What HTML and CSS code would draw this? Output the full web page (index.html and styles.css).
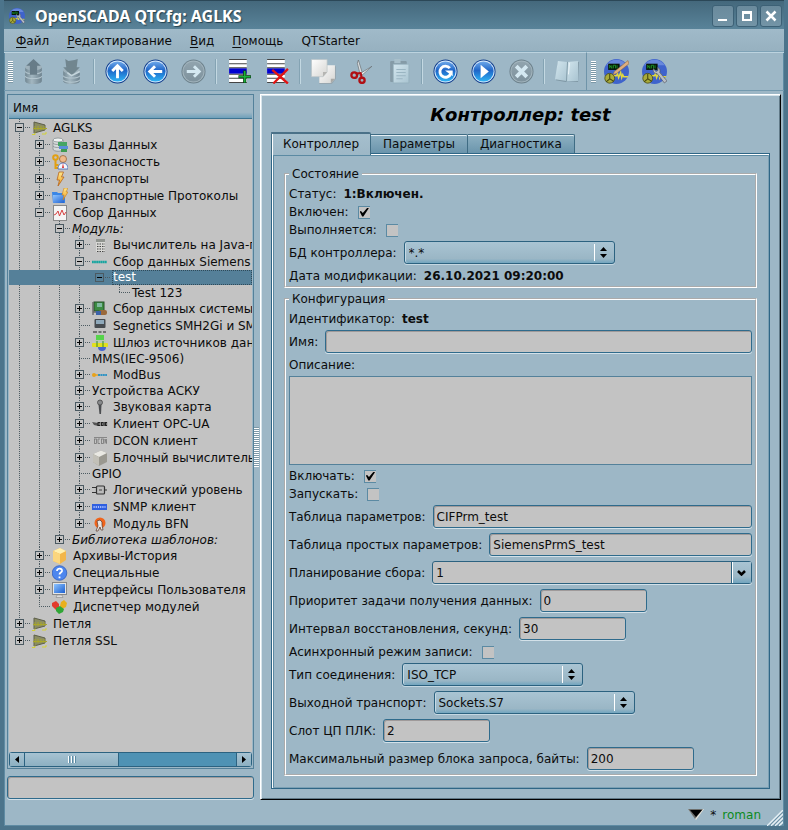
FILE: index.html
```html
<!DOCTYPE html>
<html lang="ru">
<head>
  <meta charset="UTF-8">
  <title>OpenSCADA QTCfg: AGLKS</title>
  <meta name="viewport" content="width=device-width, initial-scale=1.0">
  <link rel="stylesheet" href="styles.css">
</head>
<body>
<svg class="sprite" aria-hidden="true">
  <defs>
    <linearGradient id="gBlue" x1="0" y1="0" x2="0" y2="1">
      <stop offset="0" stop-color="#6fa8ea"/><stop offset=".45" stop-color="#1f66c8"/><stop offset="1" stop-color="#2fb4f4"/>
    </linearGradient>
    <linearGradient id="gGray" x1="0" y1="0" x2="0" y2="1">
      <stop offset="0" stop-color="#91a4ae"/><stop offset="1" stop-color="#7e929d"/>
    </linearGradient>
    <linearGradient id="gDb" x1="0" y1="0" x2="1" y2="0">
      <stop offset="0" stop-color="#728792"/><stop offset=".4" stop-color="#a3b7c1"/><stop offset="1" stop-color="#6d828e"/>
    </linearGradient>
    <linearGradient id="gPage" x1="0" y1="0" x2="1" y2="1">
      <stop offset="0" stop-color="#ffffff"/><stop offset="1" stop-color="#d5d5d2"/>
    </linearGradient>
    <linearGradient id="gPale" x1="0" y1="0" x2="1" y2="1">
      <stop offset="0" stop-color="#d3e6ee"/><stop offset="1" stop-color="#a9c4d1"/>
    </linearGradient>
    <linearGradient id="gGold" x1="0" y1="0" x2="0" y2="1">
      <stop offset="0" stop-color="#ffe98c"/><stop offset="1" stop-color="#f09a1c"/>
    </linearGradient>
    <linearGradient id="gSky" x1="0" y1="0" x2="1" y2="1">
      <stop offset="0" stop-color="#8ec4ff"/><stop offset="1" stop-color="#1c5fd0"/>
    </linearGradient>
  </defs>
  <symbol id="dbup" viewBox="0 0 24 24">
    <path d="M4 8v13c0 4 16 4 16 0V8z" fill="url(#gDb)"/>
    <path d="M4 12c2 3 14 3 16 0M4 16.500c2 3 14 3 16 0" fill="none" stroke="#b4c6cf" stroke-width="1"/>
    <ellipse cx="12" cy="8" rx="8" ry="3" fill="#9fb2bc"/>
    <path d="M12 0L5 6.500h3.500V15h7V6.500H19z" fill="#677c88"/>
  </symbol>
  <symbol id="dbdown" viewBox="0 0 24 24">
    <path d="M4 11v10c0 4 16 4 16 0V11z" fill="url(#gDb)"/>
    <path d="M4 16c2 3 14 3 16 0M4 20c2 3 14 3 16 0" fill="none" stroke="#b4c6cf" stroke-width="1"/>
    <ellipse cx="12" cy="11" rx="8" ry="3" fill="#9fb2bc"/>
    <path d="M6 0l3 2 6-1 3-1-1 8h3l-8 8-8-8h3z" fill="#71868f"/>
    <path d="M8 13l4 3 8-4" fill="none" stroke="#c5d5dc" stroke-width="1.500"/>
  </symbol>
  <symbol id="disc" viewBox="0 0 26 26">
    <circle cx="13" cy="13" r="12.500" fill="#0f3c8c"/>
    <circle cx="13" cy="13" r="11.500" fill="#d6e9fb"/>
    <circle cx="13" cy="13" r="10.500" fill="url(#gBlue)"/>
  </symbol>
  <symbol id="discgray" viewBox="0 0 26 26">
    <circle cx="13" cy="13" r="12.500" fill="#6c808b"/>
    <circle cx="13" cy="13" r="11.500" fill="#a3b5be"/>
    <circle cx="13" cy="13" r="10.500" fill="url(#gGray)"/>
  </symbol>
  <symbol id="up" viewBox="0 0 26 26">
    <use href="#disc"/><path d="M13 20V8M7.500 12.500L13 7l5.500 5.500" fill="none" stroke="#fff" stroke-width="3"/>
  </symbol>
  <symbol id="back" viewBox="0 0 26 26">
    <use href="#disc"/><path d="M20 13H8M12.500 7.500L7 13l5.500 5.500" fill="none" stroke="#fff" stroke-width="3"/>
  </symbol>
  <symbol id="forward" viewBox="0 0 26 26">
    <use href="#discgray"/><path d="M6 13h12M13.500 7.500L19 13l-5.500 5.500" fill="none" stroke="#d4e8f1" stroke-width="3"/>
  </symbol>
  <symbol id="rowadd" viewBox="0 0 24 24">
    <path d="M2 0h17v23H2z" fill="#fff"/><path d="M2 .5h17M2 4.500h17M2 8.500h17M2 14.500h17M2 18.500h17M2 22.500h17" stroke="#444" stroke-width="1"/>
    <path d="M2 9h17v5H2z" fill="#0202d0"/>
    <path d="M17 11v12M11 17h12" stroke="#0b3b12" stroke-width="3"/><path d="M17 11.500v11M11.500 17h11" stroke="#19b23a" stroke-width="1.600"/>
  </symbol>
  <symbol id="rowdel" viewBox="0 0 24 24">
    <path d="M2 0h17v23H2z" fill="#fff"/><path d="M2 .5h17M2 4.500h17M2 8.500h17M2 14.500h17M2 18.500h17M2 22.500h17" stroke="#444" stroke-width="1"/>
    <path d="M2 9h17v5H2z" fill="#0202d0"/>
    <path d="M7 10.500l15 13M22 9.500L8 23.500" stroke="#e31313" stroke-width="2.200"/>
  </symbol>
  <symbol id="copy" viewBox="0 0 24 24">
    <path d="M8 7h16v12l-4 5H8z" fill="#97a7b0"/><path d="M8 6h15v13l-4 4H8z" fill="url(#gPage)"/><path d="M23 19h-4v4z" fill="#a9a9a6"/>
    <path d="M.5.5h15v12l-4 4.500H.5z" fill="url(#gPage)" stroke="#b7c0c4" stroke-width=".6"/><path d="M15.500 12.500h-4V17z" fill="#b5b5b2"/>
  </symbol>
  <symbol id="cut" viewBox="0 0 24 24">
    <path d="M9 1l4 13-2 2L8 4z" fill="#dde1e3" stroke="#6b7377" stroke-width=".7"/>
    <path d="M22 7L12 16l-3-1z" fill="#eef0f1" stroke="#6b7377" stroke-width=".7"/>
    <circle cx="5" cy="15.500" r="2.700" fill="none" stroke="#b00f14" stroke-width="2.200"/>
    <circle cx="12.500" cy="20.500" r="2.500" fill="none" stroke="#b00f14" stroke-width="2.200"/>
    <path d="M7 14l5-.5M12 18l-.5-4" stroke="#b00f14" stroke-width="2"/>
  </symbol>
  <symbol id="paste" viewBox="0 0 24 24">
    <rect x="3" y="2" width="16" height="20" rx="1" fill="#859ba7"/><path d="M7 0h6v4H7z" fill="#a9c0cb"/>
    <path d="M6 5h15v18H6z" fill="url(#gPale)" stroke="#94afbc" stroke-width=".7"/><path d="M9 10h9M9 13h9M9 16h9M9 19h6" stroke="#9ab5c2" stroke-width="1"/>
  </symbol>
  <symbol id="refresh" viewBox="0 0 26 26">
    <use href="#disc"/><path d="M17.500 9.500A5.800 5.800 0 1 0 18.500 15" fill="none" stroke="#fff" stroke-width="3"/><path d="M12.500 12h8v6z" fill="#fff"/>
  </symbol>
  <symbol id="play" viewBox="0 0 26 26"><use href="#disc"/><path d="M10 6l8.500 7-8.500 7z" fill="#fff"/></symbol>
  <symbol id="stop" viewBox="0 0 26 26"><use href="#discgray"/><path d="M7.500 7.500l11 11M18.500 7.500l-11 11" stroke="#d4e8f1" stroke-width="4"/></symbol>
  <symbol id="book" viewBox="0 0 26 24">
    <path d="M3 3l9-1 2 1 11-1-1 21-11-1-2 1-10-2z" fill="#7f97a4"/>
    <path d="M3 1l10 1-1 20L0 20z" fill="url(#gPale)"/><path d="M13 2l11-1v21l-12 0z" fill="url(#gPale)"/>
    <path d="M13 2l-1 20" stroke="#7f9aa8" stroke-width="1"/><path d="M15 3l-1 12" stroke="#eef7fb" stroke-width="1"/>
  </symbol>
  <symbol id="scada" viewBox="0 0 24 24">
    <circle cx="12" cy="12" r="12" fill="#3f63cc"/><path d="M2 6a12 12 0 0 1 20 0z" fill="#6888dc"/>
    <path d="M4 4.500h11v6H4z" fill="#07150a"/><path d="M5.500 9V6l2 3V6M9 9V6h2v3M12.500 6v3" fill="none" stroke="#1fa02b" stroke-width=".8"/>
    <path d="M9 16h3l1-2 1 4 2-5 1 5 1-3 1 2h4" fill="none" stroke="#e2d940" stroke-width="1.400"/>
    <circle cx="5.500" cy="18.500" r="4.700" fill="#a9ab3a" stroke="#4c4d16" stroke-width=".8"/><path d="M5.500 19V14.500M5.500 19l-3.500 3M5.500 19l4 2.500" stroke="#45460f" stroke-width="1"/>
  </symbol>
  <symbol id="scadapen" viewBox="0 0 24 24">
    <use href="#scada"/><path d="M23 1.500l1 3L12 14l-3.500 1L10 12z" fill="#ddae80" stroke="#8a6238" stroke-width=".5"/>
  </symbol>
  <symbol id="scadakey" viewBox="0 0 24 24">
    <use href="#scada"/><path d="M11 9c-1 3 1 5 3.500 5l7 9 2.500-2-7-8c1-2 0-4-2-5l.3 3-2 1z" fill="#b9bec6" stroke="#4d525c" stroke-width=".6"/>
  </symbol>

  <symbol id="station" viewBox="0 0 16 16">
    <path d="M2 2l11 3v5L2 13z" fill="#8b8d63" stroke="#5d5f4a" stroke-width="1"/>
    <path d="M1 8.500h14M3 6v4M6 6v4M9 6v4M12 6v4" stroke="#a9a72a" stroke-width="1"/><path d="M0 14.500h3v-2M10 14h4v-2" fill="none" stroke="#d3d135" stroke-width="1"/>
  </symbol>
  <symbol id="db" viewBox="0 0 16 16">
    <path d="M1 3v9c0 3 10 3 10 0V3z" fill="#d6dadb" stroke="#7b8487" stroke-width=".7"/><ellipse cx="6" cy="3" rx="5" ry="2" fill="#f0f3f3" stroke="#7b8487" stroke-width=".7"/>
    <path d="M1 6c1 2 8 2 10 0M1 9c1 2 8 2 10 0" fill="none" stroke="#7b8487" stroke-width=".7"/>
    <rect x="6" y="5" width="9" height="4" fill="#45a564"/><rect x="7" y="9" width="9" height="3" fill="#5b8fd8"/><rect x="9" y="12" width="6" height="3" fill="#3d9b50"/>
  </symbol>
  <symbol id="users" viewBox="0 0 16 16">
    <circle cx="3.500" cy="3.500" r="2.300" fill="none" stroke="#e2a013" stroke-width="2"/><path d="M3.500 6v9M3.500 11h3M3.500 14h3" stroke="#e2a013" stroke-width="2"/>
    <circle cx="11" cy="5" r="3.500" fill="#efb98a" stroke="#915a2b" stroke-width=".7"/><path d="M6 15c0-8 10-8 10 0z" fill="#f4f7fc" stroke="#3e62b4" stroke-width=".8"/><path d="M11 9l-1 5h2z" fill="#d33"/>
  </symbol>
  <symbol id="bolt" viewBox="0 0 16 16"><path d="M7 1h4.500L9.500 6H12L6 15l1.500-6H5z" fill="url(#gGold)" stroke="#b8641b" stroke-width=".8"/></symbol>
  <symbol id="folder" viewBox="0 0 16 16">
    <path d="M0 4h5l1 1h7v10H1z" fill="#3a86e6"/><path d="M1 7h12l-1 8H1z" fill="url(#gSky)"/><path d="M12 0h4l-2 4h2l-5 8 1-5h-2z" fill="url(#gGold)" stroke="#c9801b" stroke-width=".6"/>
  </symbol>
  <symbol id="chart" viewBox="0 0 16 16">
    <rect x="1.500" y=".5" width="13" height="15" fill="#f4f4f4" stroke="#888"/><path d="M2 10l2-1 2-3 1.500 5L10 5l2 5 2-3" fill="none" stroke="#d84242" stroke-width="1"/>
  </symbol>
  <symbol id="calc" viewBox="0 0 16 16">
    <rect x="4" y="2" width="9" height="13" fill="#d9d9d6"/><rect x="4" y="2" width="9" height="3" fill="#90948f"/><path d="M5 7h8M5 9.500h8M5 12h8M5 14.500h8" stroke="#444" stroke-width="1.200" stroke-dasharray="1.500 1"/>
  </symbol>
  <symbol id="siemens" viewBox="0 0 16 16"><path d="M0 8h15" stroke="#16a5a0" stroke-width="2.400" stroke-dasharray="1.800 .3"/></symbol>
  <symbol id="board" viewBox="0 0 16 16">
    <rect x="2" y="1" width="10" height="9" fill="#3d8c42" stroke="#245028"/><rect x="5" y="2" width="5" height="4" fill="#7fb9a0"/><path d="M1 1v13M1 11h8" stroke="#666" stroke-width="1.400"/>
    <rect x="7" y="9" width="8" height="5" rx="2" fill="#9a6a3c"/><rect x="4" y="10" width="5" height="4" fill="#3b62a8"/>
  </symbol>
  <symbol id="smh" viewBox="0 0 16 16">
    <rect x="2.500" y="1" width="11" height="9" rx="1" fill="#464b50"/><rect x="4" y="2" width="8" height="4" fill="#8fa9bb"/><path d="M1 14h4M6.500 14h3M11 14h3" stroke="#555" stroke-width="1.400"/>
  </symbol>
  <symbol id="gate" viewBox="0 0 16 16">
    <rect x="4" y="0" width="8" height="5" fill="#56d34b"/><path d="M3 5h11v3H3z" fill="#b9c8b6"/><rect x="0" y="8" width="16" height="4" rx="1" fill="#e2df20"/><path d="M5 6v6M11 6v6" stroke="#2f8f2a"/><path d="M6 12h8a4 4 0 0 1-8 0z" fill="#4565cf"/>
  </symbol>
  <symbol id="modbus" viewBox="0 0 16 16"><circle cx="2" cy="8" r="2" fill="#e8a21b"/><path d="M2 8h4" stroke="#e8a21b" stroke-width="1.400"/><path d="M6 8h9" stroke="#2f93c4" stroke-width="2.200" stroke-dasharray="2 .4"/></symbol>
  <symbol id="mic" viewBox="0 0 16 16"><circle cx="8" cy="3.500" r="2.500" fill="#87898b" stroke="#444" stroke-width=".8"/><path d="M6.500 6h3L9 15H7.500z" fill="#4b4d50"/></symbol>
  <symbol id="opc" viewBox="0 0 16 16"><path d="M0 6l6 1v3L2 9z" fill="#555"/><path d="M5.500 8h10" stroke="#222" stroke-width="4" stroke-dasharray="2.800 .6"/><path d="M6.500 8h2M10 8h1M14 8h1" stroke="#bbb" stroke-width="1"/></symbol>
  <symbol id="dcon" viewBox="0 0 16 16"><rect x="2.500" y="6" width="2" height="4.500" fill="none" stroke="#777" stroke-width=".8"/><path d="M8 6H6v4.500h2M13 10.500V6l1.500 4.500V6M2 4.500h13" fill="none" stroke="#777" stroke-width=".8"/><rect x="9.500" y="6" width="2" height="4.500" fill="none" stroke="#777" stroke-width=".8"/></symbol>
  <symbol id="block" viewBox="0 0 16 16"><path d="M1 4l8-3.500L15 3v9l-8 4-6-4z" fill="#9a9890"/><path d="M1 4l8-3.500L15 3 7 7z" fill="#e9e8e3"/><path d="M1 4l6 3v9l-6-4z" fill="#c2c0b8"/></symbol>
  <symbol id="logic" viewBox="0 0 16 16"><path d="M0 5.500h5M0 10.500h5M11 8h4" stroke="#333" stroke-width="1.200"/><rect x="4.500" y="4" width="8" height="8" rx="1" fill="#bbb" stroke="#333" stroke-width="1.200"/><path d="M7 8h3" stroke="#444"/></symbol>
  <symbol id="snmp" viewBox="0 0 16 16"><rect x="0" y="5" width="15" height="6" fill="#2f5fe0"/><path d="M1.500 8h12" stroke="#a9c0ff" stroke-width="2" stroke-dasharray="1.200 1"/></symbol>
  <symbol id="bfn" viewBox="0 0 16 16"><circle cx="8" cy="7" r="5.500" fill="#f0641c"/><path d="M5 5l3-1 2 2v3l1 5H9l-1-3-2 4H4l2-5z" fill="#e9e4e0" stroke="#5a3a2c" stroke-width=".7"/></symbol>
  <symbol id="archive" viewBox="0 0 16 16"><path d="M1 3l7-3 6 3v9l-6 4-7-3z" fill="#f2b64a"/><path d="M1 3l7-3 6 3-6 3z" fill="#fff0b0"/><path d="M1 3l7 3v10l-7-3z" fill="#fbd67e"/></symbol>
  <symbol id="help" viewBox="0 0 16 16"><circle cx="7.500" cy="8" r="7.300" fill="#4d86ee" stroke="#3260bd" stroke-width=".8"/><path d="M5 6c0-3.500 5.500-3 5 0-.3 1.500-2.500 1.500-2.500 3.500M7.500 11.500v1.800" fill="none" stroke="#fff" stroke-width="1.800"/></symbol>
  <symbol id="monitor" viewBox="0 0 16 16"><rect x=".5" y=".5" width="14" height="12" fill="#e4e6e8" stroke="#888"/><rect x="2" y="2" width="11" height="9" fill="url(#gSky)"/><path d="M5 13h5l1 2.500H4z" fill="#ddd" stroke="#888" stroke-width=".6"/></symbol>
  <symbol id="modules" viewBox="0 0 16 16"><path d="M0 4l4-2 3 3v4l-3 2-4-4z" fill="#e23b2b"/><path d="M9 3l3-2 3 3-1 4-4 2-2-3z" fill="#e8b01e"/><path d="M4 9l4-2 4 3-1 3-4 2-3-3z" fill="#31a636"/></symbol>
  <symbol id="updown" viewBox="0 0 7 11"><path d="M3.500 0L7 4H0zM3.500 11L0 7h7z"/></symbol>
</svg>

<div class="window">
  <header class="titlebar">
    <svg class="ico16"><use href="#scadakey"/></svg>
    <h1>OpenSCADA QTCfg: AGLKS</h1>
    <button class="winbtn" aria-label="Свернуть"><svg viewBox="0 0 12 12"><path d="M1 10h9" stroke="#fff" stroke-width="2"/></svg></button>
    <button class="winbtn" aria-label="Развернуть"><svg viewBox="0 0 12 12"><path d="M1 1h10v10H1zM3 4v5h6V4z" fill="#fff" fill-rule="evenodd"/></svg></button>
    <button class="winbtn" aria-label="Закрыть"><svg viewBox="0 0 12 12"><path d="M1.500 1.500l9 9M10.500 1.500l-9 9" stroke="#fff" stroke-width="2.500"/></svg></button>
  </header>

  <nav class="menubar">
    <a href="#"><u>Ф</u>айл</a>
    <a href="#"><u>Р</u>едактирование</a>
    <a href="#"><u>В</u>ид</a>
    <a href="#"><u>П</u>омощь</a>
    <a href="#">QTStarter</a>
  </nav>

  <div class="toolbars">
    <div class="toolbar">
      <span class="grip"></span>
      <button class="tool" aria-label="Загрузить"><svg><use href="#dbup"/></svg></button>
      <button class="tool" aria-label="Сохранить"><svg><use href="#dbdown"/></svg></button>
      <span class="sep"></span>
      <button class="tool" aria-label="Вверх"><svg><use href="#up"/></svg></button>
      <button class="tool" aria-label="Назад"><svg><use href="#back"/></svg></button>
      <button class="tool" aria-label="Вперёд"><svg><use href="#forward"/></svg></button>
      <span class="sep"></span>
      <button class="tool" aria-label="Добавить"><svg><use href="#rowadd"/></svg></button>
      <button class="tool" aria-label="Удалить"><svg><use href="#rowdel"/></svg></button>
      <span class="sep"></span>
      <button class="tool" aria-label="Копировать"><svg><use href="#copy"/></svg></button>
      <button class="tool" aria-label="Вырезать"><svg><use href="#cut"/></svg></button>
      <button class="tool" aria-label="Вставить"><svg><use href="#paste"/></svg></button>
      <span class="sep"></span>
      <button class="tool" aria-label="Обновить"><svg><use href="#refresh"/></svg></button>
      <button class="tool" aria-label="Запустить"><svg><use href="#play"/></svg></button>
      <button class="tool" aria-label="Остановить"><svg><use href="#stop"/></svg></button>
      <span class="sep"></span>
      <button class="tool" aria-label="Руководство"><svg><use href="#book"/></svg></button>
    </div>
    <div class="toolbar">
      <span class="grip"></span>
      <button class="tool" aria-label="Vision"><svg><use href="#scadapen"/></svg></button>
      <button class="tool" aria-label="QTCfg"><svg><use href="#scadakey"/></svg></button>
    </div>
  </div>

  <main class="main">
    <aside class="side">
      <div class="tree">
        <div class="tree-head">Имя</div>
        <ul class="tree-list">
          <li><div class="row"><button class="exp open" aria-label="Свернуть"></button><svg class="ico16"><use href="#station"/></svg>AGLKS</div>
            <ul>
              <li><div class="row"><button class="exp" aria-label="Раскрыть"></button><svg class="ico16"><use href="#db"/></svg>Базы Данных</div></li>
              <li><div class="row"><button class="exp" aria-label="Раскрыть"></button><svg class="ico16"><use href="#users"/></svg>Безопасность</div></li>
              <li><div class="row"><button class="exp" aria-label="Раскрыть"></button><svg class="ico16"><use href="#bolt"/></svg>Транспорты</div></li>
              <li><div class="row"><button class="exp" aria-label="Раскрыть"></button><svg class="ico16"><use href="#folder"/></svg>Транспортные Протоколы</div></li>
              <li><div class="row"><button class="exp open" aria-label="Свернуть"></button><svg class="ico16"><use href="#chart"/></svg>Сбор Данных</div>
                <ul>
                  <li><div class="row plain group"><button class="exp open" aria-label="Свернуть"></button>Модуль:</div>
                    <ul>
                      <li><div class="row"><button class="exp" aria-label="Раскрыть"></button><svg class="ico16"><use href="#calc"/></svg>Вычислитель на Java-подобном языке</div></li>
                      <li><div class="row"><button class="exp open" aria-label="Свернуть"></button><svg class="ico16"><use href="#siemens"/></svg>Сбор данных Siemens</div>
                        <ul>
                          <li><div class="row plain selected"><button class="exp open" aria-label="Свернуть"></button><span class="focus">test</span></div>
                            <ul>
                              <li><div class="row plain leaf">Test 123</div></li>
                            </ul>
                          </li>
                        </ul>
                      </li>
                      <li><div class="row"><button class="exp" aria-label="Раскрыть"></button><svg class="ico16"><use href="#board"/></svg>Сбор данных системы</div></li>
                      <li><div class="row leaf"><svg class="ico16"><use href="#smh"/></svg>Segnetics SMH2Gi и SMH4</div></li>
                      <li><div class="row"><button class="exp" aria-label="Раскрыть"></button><svg class="ico16"><use href="#gate"/></svg>Шлюз источников данных</div></li>
                      <li><div class="row plain leaf">MMS(IEC-9506)</div></li>
                      <li><div class="row"><button class="exp" aria-label="Раскрыть"></button><svg class="ico16"><use href="#modbus"/></svg>ModBus</div></li>
                      <li><div class="row plain"><button class="exp" aria-label="Раскрыть"></button>Устройства АСКУ</div></li>
                      <li><div class="row"><button class="exp" aria-label="Раскрыть"></button><svg class="ico16"><use href="#mic"/></svg>Звуковая карта</div></li>
                      <li><div class="row"><button class="exp" aria-label="Раскрыть"></button><svg class="ico16"><use href="#opc"/></svg>Клиент OPC-UA</div></li>
                      <li><div class="row"><button class="exp" aria-label="Раскрыть"></button><svg class="ico16"><use href="#dcon"/></svg>DCON клиент</div></li>
                      <li><div class="row"><button class="exp" aria-label="Раскрыть"></button><svg class="ico16"><use href="#block"/></svg>Блочный вычислитель</div></li>
                      <li><div class="row plain leaf">GPIO</div></li>
                      <li><div class="row"><button class="exp" aria-label="Раскрыть"></button><svg class="ico16"><use href="#logic"/></svg>Логический уровень</div></li>
                      <li><div class="row"><button class="exp" aria-label="Раскрыть"></button><svg class="ico16"><use href="#snmp"/></svg>SNMP клиент</div></li>
                      <li><div class="row"><button class="exp" aria-label="Раскрыть"></button><svg class="ico16"><use href="#bfn"/></svg>Модуль BFN</div></li>
                    </ul>
                  </li>
                  <li><div class="row plain group"><button class="exp" aria-label="Раскрыть"></button>Библиотека шаблонов:</div></li>
                </ul>
              </li>
              <li><div class="row"><button class="exp" aria-label="Раскрыть"></button><svg class="ico16"><use href="#archive"/></svg>Архивы-История</div></li>
              <li><div class="row"><button class="exp" aria-label="Раскрыть"></button><svg class="ico16"><use href="#help"/></svg>Специальные</div></li>
              <li><div class="row"><button class="exp" aria-label="Раскрыть"></button><svg class="ico16"><use href="#monitor"/></svg>Интерфейсы Пользователя</div></li>
              <li><div class="row leaf"><svg class="ico16"><use href="#modules"/></svg>Диспетчер модулей</div></li>
            </ul>
          </li>
          <li><div class="row"><button class="exp" aria-label="Раскрыть"></button><svg class="ico16"><use href="#station"/></svg>Петля</div></li>
          <li><div class="row"><button class="exp" aria-label="Раскрыть"></button><svg class="ico16"><use href="#station"/></svg>Петля SSL</div></li>
        </ul>
        <div class="scrollbar">
          <button aria-label="Влево"><svg viewBox="0 0 4 7"><path d="M4 0v7L0 3.500z"/></svg></button>
          <span class="thumb"><i></i><i></i><i></i></span>
          <span class="track"></span>
          <button aria-label="Вправо"><svg viewBox="0 0 4 7"><path d="M0 0v7l4-3.500z"/></svg></button>
        </div>
      </div>
      <input class="field search" type="text" aria-label="Поиск">
    </aside>

    <div class="splitter"><span></span></div>

    <section class="panel">
      <h2>Контроллер: test</h2>
      <div class="tabs">
        <button class="tab active">Контроллер</button>
        <button class="tab">Параметры</button>
        <button class="tab">Диагностика</button>
      </div>
      <form class="page">
        <fieldset>
          <legend>Состояние</legend>
          <div class="line"><span>Статус:</span><b>1:Включен.</b></div>
          <div class="line"><label for="on">Включен:</label><input type="checkbox" id="on" checked></div>
          <div class="line"><label for="run">Выполняется:</label><input type="checkbox" id="run"></div>
          <div class="line tall"><label for="db-ctr">БД контроллера:</label>
            <span class="combo w211"><select id="db-ctr"><option>*.*</option></select><svg><use href="#updown"/></svg></span></div>
          <div class="line"><span>Дата модификации:</span><b>26.10.2021 09:20:00</b></div>
        </fieldset>
        <fieldset>
          <legend>Конфигурация</legend>
          <div class="line"><span>Идентификатор:</span><b>test</b></div>
          <div class="line tall"><label for="name">Имя:</label><input class="field grow" type="text" id="name"></div>
          <div class="line"><label for="descr">Описание:</label></div>
          <textarea id="descr"></textarea>
          <div class="line"><label for="toen">Включать:</label><input type="checkbox" id="toen" checked></div>
          <div class="line"><label for="tostart">Запускать:</label><input type="checkbox" id="tostart"></div>
          <div class="line tall"><label for="tbl">Таблица параметров:</label><input class="field grow" type="text" id="tbl" value="CIFPrm_test"></div>
          <div class="line tall"><label for="tbls">Таблица простых параметров:</label><input class="field grow" type="text" id="tbls" value="SiemensPrmS_test"></div>
          <div class="line tall"><label for="sched">Планирование сбора:</label>
            <span class="editcombo"><input type="text" id="sched" value="1"><button type="button" aria-label="Список"><svg viewBox="0 0 9 6"><path d="M1 1l3.500 3.500L8 1" fill="none" stroke="#000" stroke-width="2.500"/></svg></button></span></div>
          <div class="line tall"><label for="prior">Приоритет задачи получения данных:</label><input class="field short" type="text" id="prior" value="0"></div>
          <div class="line tall"><label for="rest">Интервал восстановления, секунд:</label><input class="field short" type="text" id="rest" value="30"></div>
          <div class="line"><label for="async">Асинхронный режим записи:</label><input type="checkbox" id="async"></div>
          <div class="line tall"><label for="ctype">Тип соединения:</label>
            <span class="combo w181"><select id="ctype"><option>ISO_TCP</option></select><svg><use href="#updown"/></svg></span></div>
          <div class="line tall"><label for="tr">Выходной транспорт:</label>
            <span class="combo w201"><select id="tr"><option>Sockets.S7</option></select><svg><use href="#updown"/></svg></span></div>
          <div class="line tall"><label for="slot">Слот ЦП ПЛК:</label><input class="field short" type="text" id="slot" value="2"></div>
          <div class="line tall"><label for="blk">Максимальный размер блока запроса, байты:</label><input class="field short" type="text" id="blk" value="200"></div>
        </fieldset>
      </form>
    </section>
  </main>

  <footer class="statusbar">
    <svg class="down" viewBox="0 0 16 11"><path d="M0 0h16L8 11z" fill="#e8e4da"/><path d="M0 0h15L7 10z" fill="#6d6f6d"/><path d="M2 1h12L8 8z" fill="#000"/></svg>
    <span>*</span>
    <a href="#">roman</a>
    <svg class="sizegrip" viewBox="0 0 16 16"><path d="M0 16L16 0M4 16L16 4M8 16l8-8M12 16l4-4" stroke="#e6f0f5" stroke-width="1.300"/><path d="M2 16L16 2M6 16L16 6M10 16l6-6M14 16l2-2" stroke="#6f93a7" stroke-width="1"/></svg>
  </footer>
</div>
</body>
</html>
```
FILE: styles.css
```css
* {
  box-sizing: border-box;
}
body {
  margin: 0;
  font: 12px/14px "DejaVu Sans", sans-serif;
  color: #0c0c0c;
  background: #9db7c6;
}
button, input, select, textarea {
  font: inherit;
  color: inherit;
  margin: 0;
  padding: 0;
  outline: none;
}
ul {
  list-style: none;
  margin: 0;
  padding: 0;
}
.sprite {
  position: absolute;
  width: 0;
  height: 0;
}
.ico16 {
  flex: none;
  width: 16px;
  height: 16px;
}

.window {
  display: flex;
  flex-direction: column;
  min-height: 100vh;
  border: 4px solid #4c748b;
  border-top: 0;
  box-shadow: inset 0 0 0 1px #5f8ba3;
}

/* title */
.titlebar {
  display: flex;
  align-items: center;
  gap: 2px;
  height: 29px;
  padding: 2px 2px 0 5px;
  background: linear-gradient(#44687c, #598399);
  border-top: 1px solid #2b4757;
}
.titlebar h1 {
  flex: 1;
  margin: 0;
  padding-left: 8px;
  font: bold 16px/20px "Noto Sans", sans-serif;
  color: #fff;
  text-shadow: 1px 1px 1px #23414f;
}
.winbtn {
  display: grid;
  place-items: center;
  width: 22px;
  height: 22px;
  background: linear-gradient(#6a8a9c, #7394a6);
  border: 1px solid #3d6176;
  border-radius: 3px;
}
.winbtn svg {
  width: 12px;
  height: 12px;
}

/* menu and toolbars */
.menubar {
  display: flex;
  height: 22px;
  padding: 5px 3px 0;
  background: linear-gradient(#a0bac9, #97b1c0);
}
.menubar a {
  padding: 0 9px;
  color: inherit;
  text-decoration: none;
}
.menubar u {
  text-underline-offset: 2px;
}
.toolbars {
  display: flex;
  height: 40px;
  border-top: 1px solid #7ea2b6;
  border-bottom: 1px solid #7399ae;
}
.toolbar {
  display: flex;
  align-items: center;
  padding-left: 3px;
  border-top: 1px solid #bcd3df;
}
.toolbar + .toolbar {
  flex: 1;
  border-left: 1px solid #6f94a9;
}
.grip {
  width: 5px;
  height: 22px;
  margin: 0 1px;
  background: repeating-linear-gradient(#fff 0 1px, #7c98a7 1px 2px);
}
.tool {
  display: grid;
  place-items: center;
  width: 38px;
  height: 36px;
  background: none;
  border: 0;
}
.tool svg {
  width: 25px;
  height: 25px;
}
.sep {
  width: 2px;
  height: 25px;
  margin: 0 3px;
  border-left: 1px solid #84a3b3;
  background: #c3d8e2;
}

/* left side */
.main {
  flex: 1;
  display: flex;
  padding: 3px 3px 0;
}
.side {
  flex: 0 0 247px;
  display: flex;
  flex-direction: column;
  gap: 7px;
  min-width: 0;
}
.tree {
  flex: 1;
  display: flex;
  flex-direction: column;
  border: 1px solid #54819a;
  background: #9db7c6;
  padding: 0 1px 1px;
}
.tree-head {
  height: 24px;
  padding: 6px 4px 0;
  border-bottom: 1px solid #3e7592;
  background: linear-gradient(#9db7c6 75%, #6fa0ba);
}
.tree-list {
  flex: 1;
  overflow: hidden;
  background: #c3c3c3;
}
/* dotted guides of the tree */
.tree li {
  background: repeating-linear-gradient(#4d5b62 0 1px, transparent 1px 2px) 10px 0 / 1px 100% no-repeat;
}
.tree li:last-child {
  background-size: 1px 8px;
}
.tree li ul {
  padding-left: 20px;
}
.row {
  display: flex;
  align-items: center;
  height: 17px;
  padding-left: 6px;
  white-space: nowrap;
  background: repeating-linear-gradient(90deg, #4d5b62 0 1px, transparent 1px 2px) 10px 8px / 11px 1px no-repeat;
}
.row .ico16 {
  margin-right: 5px;
}
.plain {
  height: 15px;
  background-position: 10px 7px;
}
.leaf {
  padding-left: 23px;
}
.group {
  font-style: italic;
}
.selected {
  color: #fff;
  background-color: #558099;
  box-shadow: -90px 0 0 #558099;
}
.focus {
  flex: 1;
  border: 1px dotted #2f4a59;
  height: 15px;
  line-height: 13px;
}
.exp {
  flex: none;
  width: 9px;
  height: 9px;
  margin-right: 8px;
  border: 1px solid #4b5a62;
  background:
    linear-gradient(#000, #000) center / 5px 1px no-repeat,
    linear-gradient(#000, #000) center / 1px 5px no-repeat,
    #c3c3c3;
}
.exp.open {
  background:
    linear-gradient(#000, #000) center / 5px 1px no-repeat,
    #c3c3c3;
}
.selected .exp {
  background-color: #558099;
}

.scrollbar {
  display: flex;
  height: 15px;
  border: 1px solid #2c6280;
  border-radius: 3px;
  background: #4f92b4;
}
.scrollbar button {
  display: grid;
  place-items: center;
  width: 14px;
  border: 0;
  background: linear-gradient(#a7c3d2, #8db0c2);
}
.scrollbar button svg {
  width: 4px;
  height: 7px;
}
.thumb {
  width: 95px;
  display: flex;
  justify-content: center;
  align-items: center;
  gap: 1px;
  border: 1px solid #2c6280;
  border-width: 0 1px;
  background: linear-gradient(#a7c3d2, #8db0c2);
}
.thumb i {
  width: 2px;
  height: 7px;
  border-left: 1px solid #fff;
  background: #5b8ba4;
}
.track {
  flex: 1;
  border-right: 1px solid #2c6280;
}
.splitter {
  display: flex;
  align-items: center;
  width: 6px;
}
.splitter span {
  width: 5px;
  height: 40px;
  background: repeating-linear-gradient(#7c98a7 0 1px, #fff 1px 2px);
}

/* form controls */
.field {
  height: 23px;
  margin-bottom: 1px;
  padding: 0 3px;
  background: #c3c3c3;
  border: 1px solid #2f6b8c;
  border-radius: 3px;
  box-shadow: 0 1px 0 #d3e1e9, inset 1px 1px 0 #9f9a9a;
}
.grow {
  flex: 1;
  min-width: 0;
}
.short {
  width: 107px;
}
textarea {
  display: block;
  height: 89px;
  background: #c3c3c3;
  border: 1px solid #54819a;
  resize: none;
}
input[type="checkbox"] {
  appearance: none;
  width: 12px;
  height: 13px;
  margin-left: 2px;
  background: #c3c3c3;
  border: 1px solid #5b8aa3;
  border-right: 0;
}
input[type="checkbox"]:checked::before {
  content: "";
  display: block;
  width: 9px;
  height: 9px;
  margin: 1px;
  background: #000;
  clip-path: polygon(0 45%, 15% 38%, 35% 60%, 88% 0, 100% 0, 100% 12%, 42% 100%, 28% 100%);
}
.combo {
  position: relative;
  height: 23px;
  margin-bottom: 1px;
}
.combo select {
  appearance: none;
  width: 100%;
  height: 23px;
  padding: 0 4px;
  border: 1px solid #2c6280;
  border-radius: 3px;
  background:
    linear-gradient(#fff, #fff) right 19px center / 1px 17px no-repeat,
    linear-gradient(#a9c4d3, #9ab6c5 80%, #72a5bf);
  box-shadow: 0 1px 0 #c5d8e2, inset 1px 0 0 #c5dae5;
}
.combo svg {
  position: absolute;
  right: 8px;
  top: 6px;
  width: 7px;
  height: 11px;
  pointer-events: none;
}
.w181 { width: 181px; }
.w201 { width: 201px; }
.w211 { width: 211px; }
.editcombo {
  flex: 1;
  display: flex;
  height: 23px;
  margin-bottom: 1px;
  border: 1px solid #2c6280;
  border-radius: 3px;
  background: #c3c3c3;
  box-shadow: 0 1px 0 #d3e1e9;
}
.editcombo input {
  flex: 1;
  min-width: 0;
  padding: 0 3px;
  border: 0;
  background: none;
}
.editcombo button {
  display: grid;
  place-items: center;
  width: 20px;
  border: 0;
  border-left: 1px solid #2c6280;
  box-shadow: inset 1px 0 0 #fff;
  background: linear-gradient(#a9c4d3, #9ab6c5 70%, #72a5bf);
}
.editcombo svg {
  width: 9px;
  height: 6px;
}

/* right panel */
.panel {
  flex: 1;
  min-width: 0;
  display: flex;
  flex-direction: column;
  padding: 9px 10px 10px;
  border: 1px solid;
  border-color: #fff #000 #000 #fff;
  box-shadow: inset 1px 1px 0 #d6e4eb, inset -1px -1px 0 #607987;
}
.panel h2 {
  margin: 0;
  font: italic bold 18px/22px "DejaVu Sans", sans-serif;
  color: #000;
  text-align: center;
}
.tabs {
  display: flex;
  align-items: flex-end;
  height: 27px;
}
.tab {
  height: 19px;
  padding: 0 12px;
  border: 1px solid #3f6c84;
  border-left: 0;
  border-bottom: 0;
  border-radius: 0 2px 0 0;
  background: linear-gradient(#8db0c2, #6b95ac);
  box-shadow: inset 0 1px 0 #e4eef3;
}
.tab.active {
  height: 23px;
  margin-bottom: -2px;
  padding: 0 11px 1px;
  border-left: 1px solid #3f6c84;
  border-top: 2px solid #4a7188;
  background: linear-gradient(#a5bfcd, #9db7c6);
  box-shadow: inset 1px 0 0 #fff;
  z-index: 1;
}
.page {
  flex: 1;
  display: flex;
  flex-direction: column;
  gap: 4px;
  padding: 13px 12px 12px;
  border: 1px solid #2f6686;
  box-shadow: inset 1px 1px 0 #fff, inset -1px -1px 0 #7ba0b4, inset 2px 2px 0 #5b8aa3;
}
fieldset {
  display: flex;
  flex-direction: column;
  gap: 4px;
  min-width: 0;
  margin: 0;
  padding: 6px 3px 3px;
  border: 2px groove #fff;
}
legend {
  padding: 0 3px;
}
.line {
  display: flex;
  align-items: center;
  gap: 7px;
  height: 14px;
}
.tall {
  height: 24px;
}

/* status */
.statusbar {
  display: flex;
  align-items: center;
  justify-content: flex-end;
  gap: 6px;
  height: 26px;
  padding: 3px 1px 0 0;
}
.statusbar a {
  color: #0c8a1c;
  text-decoration: none;
}
.down {
  width: 16px;
  height: 11px;
}
.sizegrip {
  width: 16px;
  height: 16px;
  align-self: flex-end;
}
```
